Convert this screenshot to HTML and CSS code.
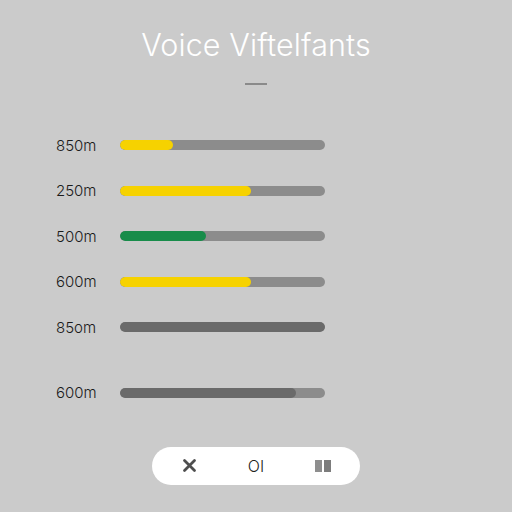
FILE: index.html
```html
<!DOCTYPE html>
<html lang="en">
<head>
    <meta charset="UTF-8">
    <meta name="viewport" content="width=device-width, initial-scale=1.0">
    <title>Voice Viftelfants</title>
    <link rel="stylesheet" href="styles.css">
</head>
<body>
    <div class="screen">
        <h1 class="title">Voice Viftelfants</h1>
        <div class="title-rule"></div>

        <div class="levels">
            <div class="level">
                <span class="level-label">850m</span>
                <div class="track"><div class="fill yellow" style="width: 26%"></div></div>
            </div>
            <div class="level">
                <span class="level-label">250m</span>
                <div class="track"><div class="fill yellow" style="width: 64%"></div></div>
            </div>
            <div class="level">
                <span class="level-label">500m</span>
                <div class="track"><div class="fill green" style="width: 42%"></div></div>
            </div>
            <div class="level">
                <span class="level-label">600m</span>
                <div class="track"><div class="fill yellow" style="width: 64%"></div></div>
            </div>
            <div class="level">
                <span class="level-label">85om</span>
                <div class="track"><div class="fill dark" style="width: 100%"></div></div>
            </div>
            <div class="level level-last">
                <span class="level-label">600m</span>
                <div class="track"><div class="fill dark" style="width: 86%"></div></div>
            </div>
        </div>

        <div class="controls">
            <button class="control" aria-label="Close">
                <svg width="15" height="15" viewBox="0 0 15 15">
                    <path d="M2.5 2.5 L12.5 12.5 M12.5 2.5 L2.5 12.5" stroke="#4e4e4e" stroke-width="2.8" stroke-linecap="round"/>
                </svg>
            </button>
            <button class="control control-text">OI</button>
            <button class="control" aria-label="Pause">
                <svg width="18" height="14" viewBox="0 0 18 14">
                    <rect x="1" y="1" width="7" height="12" fill="#8e8e8e"/>
                    <rect x="10" y="1" width="7" height="12" fill="#7c7c7c"/>
                </svg>
            </button>
        </div>
    </div>
</body>
</html>
```

FILE: styles.css
```css
body {
    margin: 0;
    background-color: #cbcbcb;
    font-family: "Inter", "Liberation Sans", sans-serif;
}

.screen {
    width: 512px;
    height: 512px;
    display: flex;
    flex-direction: column;
    align-items: center;
}

.title {
    margin: 28px 0 0;
    font-size: 30.5px;
    line-height: 34px;
    font-weight: 300;
    color: #ffffff;
    letter-spacing: 0.1px;
}

.title-rule {
    width: 22px;
    height: 2px;
    margin-top: 21px;
    background-color: #8a8a8a;
}

.levels {
    align-self: stretch;
    display: flex;
    flex-direction: column;
    gap: 25.5px;
    padding-left: 56px;
    margin-top: 50px;
}

.level {
    display: flex;
    align-items: center;
    height: 20px;
}

/* last row sits a bit further down */
.level-last {
    margin-top: 20px;
}

.level-label {
    width: 64px;
    font-size: 15px;
    font-weight: 300;
    color: #1a1a1a;
}

.track {
    width: 205px;
    height: 10px;
    border-radius: 5px;
    background-color: #8c8c8c;
    overflow: hidden;
}

.fill {
    height: 100%;
    border-radius: 5px;
}

.yellow { background-color: #f6d200; }
.green { background-color: #188c4a; }
.dark { background-color: #6a6a6a; }

.controls {
    margin-top: 44px;
    width: 208px;
    height: 38px;
    border-radius: 19px;
    background-color: #ffffff;
    display: flex;
    justify-content: center;
    align-items: center;
    gap: 27px;
}

.control {
    border: none;
    background: none;
    padding: 0;
    width: 40px;
    display: flex;
    justify-content: center;
    align-items: center;
}

.control-text {
    font-family: "Inter", "Liberation Sans", sans-serif;
    font-size: 16px;
    font-weight: 300;
    color: #222222;
}
```
